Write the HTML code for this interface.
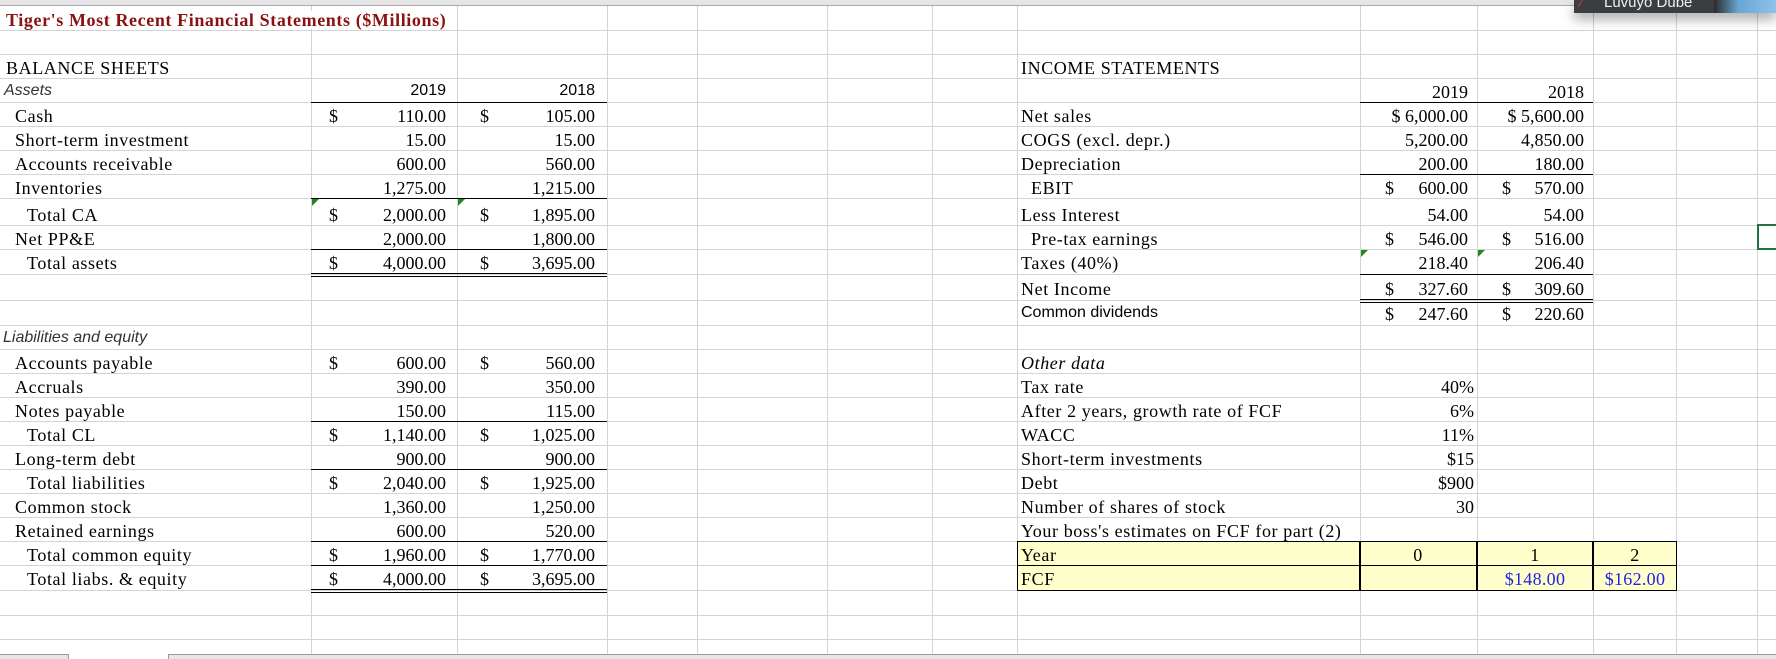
<!DOCTYPE html>
<html><head><meta charset="utf-8">
<style>
*{margin:0;padding:0;box-sizing:border-box}
body{width:1776px;height:659px;overflow:hidden;background:#fff;position:relative;font-family:"Liberation Serif",serif;font-size:18px;color:#000}
.h{position:absolute;left:0;width:1776px;height:1px;background:#d4d4d4}
.v{position:absolute;top:6px;height:648px;width:1px;background:#d4d4d4}
.t{position:absolute;white-space:nowrap;line-height:1}
.t:not(.r){letter-spacing:.6px}
.s{font-family:"Liberation Sans",sans-serif;font-size:16px}
.t.s{letter-spacing:0}
.r{text-align:right}
.bk{position:absolute;height:1px;background:#000}
.dbl{position:absolute;height:4px;border-top:1px solid #000;border-bottom:1px solid #000}
.tri{position:absolute;width:0;height:0;border-top:7px solid #1e8a1e;border-right:7px solid transparent}
</style></head><body>

<div style="position:absolute;left:0;top:0;width:1776px;height:6px;background:#e6e6e6;border-bottom:1px solid #ababab"></div>

<div class="h" style="top:30px"></div><div class="h" style="top:54px"></div><div class="h" style="top:78px"></div>
<div class="h" style="top:102px"></div><div class="h" style="top:126px"></div><div class="h" style="top:150px"></div>
<div class="h" style="top:174px"></div><div class="h" style="top:198px"></div><div class="h" style="top:225px"></div>
<div class="h" style="top:249px"></div><div class="h" style="top:274px"></div><div class="h" style="top:300px"></div>
<div class="h" style="top:325px"></div><div class="h" style="top:349px"></div><div class="h" style="top:373px"></div>
<div class="h" style="top:397px"></div><div class="h" style="top:421px"></div><div class="h" style="top:445px"></div>
<div class="h" style="top:469px"></div><div class="h" style="top:493px"></div><div class="h" style="top:517px"></div>
<div class="h" style="top:541px"></div><div class="h" style="top:565px"></div><div class="h" style="top:590px"></div>
<div class="h" style="top:615px"></div><div class="h" style="top:639px"></div>

<div class="v" style="left:311px"></div><div class="v" style="left:457px"></div><div class="v" style="left:607px"></div>
<div class="v" style="left:697px"></div><div class="v" style="left:827px"></div><div class="v" style="left:932px"></div>
<div class="v" style="left:1017px"></div><div class="v" style="left:1360px"></div><div class="v" style="left:1477px"></div>
<div class="v" style="left:1593px"></div><div class="v" style="left:1676px"></div><div class="v" style="left:1757px"></div>

<div class="t" style="left:6px;top:11px;font-weight:bold;color:#8b1010;font-size:18px;background:#fff;padding-right:4px">Tiger's Most Recent Financial Statements ($Millions)</div>

<div class="t" style="left:6px;top:59px">BALANCE SHEETS</div>
<div class="t s" style="left:4px;top:83px;font-style:italic;color:#333">Assets</div>
<div class="t" style="left:15px;top:107px">Cash</div>
<div class="t" style="left:15px;top:131px">Short-term investment</div>
<div class="t" style="left:15px;top:155px">Accounts receivable</div>
<div class="t" style="left:15px;top:179px">Inventories</div>
<div class="t" style="left:27px;top:206px">Total CA</div>
<div class="t" style="left:15px;top:230px">Net PP&amp;E</div>
<div class="t" style="left:27px;top:254px">Total assets</div>

<div class="t s" style="left:3px;top:330px;font-style:italic;color:#333">Liabilities and equity</div>
<div class="t" style="left:15px;top:354px">Accounts payable</div>
<div class="t" style="left:15px;top:378px">Accruals</div>
<div class="t" style="left:15px;top:402px">Notes payable</div>
<div class="t" style="left:27px;top:426px">Total CL</div>
<div class="t" style="left:15px;top:450px">Long-term debt</div>
<div class="t" style="left:27px;top:474px">Total liabilities</div>
<div class="t" style="left:15px;top:498px">Common stock</div>
<div class="t" style="left:15px;top:522px">Retained earnings</div>
<div class="t" style="left:27px;top:546px">Total common equity</div>
<div class="t" style="left:27px;top:570px">Total liabs. &amp; equity</div>

<div class="t s r" style="right:1330px;top:83px">2019</div>
<div class="t s r" style="right:1181px;top:83px">2018</div>

<div class="t" style="left:329px;top:107px">$</div><div class="t r" style="right:1330px;top:107px">110.00</div>
<div class="t" style="left:480px;top:107px">$</div><div class="t r" style="right:1181px;top:107px">105.00</div>
<div class="t r" style="right:1330px;top:131px">15.00</div><div class="t r" style="right:1181px;top:131px">15.00</div>
<div class="t r" style="right:1330px;top:155px">600.00</div><div class="t r" style="right:1181px;top:155px">560.00</div>
<div class="t r" style="right:1330px;top:179px">1,275.00</div><div class="t r" style="right:1181px;top:179px">1,215.00</div>
<div class="t" style="left:329px;top:206px">$</div><div class="t r" style="right:1330px;top:206px">2,000.00</div>
<div class="t" style="left:480px;top:206px">$</div><div class="t r" style="right:1181px;top:206px">1,895.00</div>
<div class="t r" style="right:1330px;top:230px">2,000.00</div><div class="t r" style="right:1181px;top:230px">1,800.00</div>
<div class="t" style="left:329px;top:254px">$</div><div class="t r" style="right:1330px;top:254px">4,000.00</div>
<div class="t" style="left:480px;top:254px">$</div><div class="t r" style="right:1181px;top:254px">3,695.00</div>

<div class="t" style="left:329px;top:354px">$</div><div class="t r" style="right:1330px;top:354px">600.00</div>
<div class="t" style="left:480px;top:354px">$</div><div class="t r" style="right:1181px;top:354px">560.00</div>
<div class="t r" style="right:1330px;top:378px">390.00</div><div class="t r" style="right:1181px;top:378px">350.00</div>
<div class="t r" style="right:1330px;top:402px">150.00</div><div class="t r" style="right:1181px;top:402px">115.00</div>
<div class="t" style="left:329px;top:426px">$</div><div class="t r" style="right:1330px;top:426px">1,140.00</div>
<div class="t" style="left:480px;top:426px">$</div><div class="t r" style="right:1181px;top:426px">1,025.00</div>
<div class="t r" style="right:1330px;top:450px">900.00</div><div class="t r" style="right:1181px;top:450px">900.00</div>
<div class="t" style="left:329px;top:474px">$</div><div class="t r" style="right:1330px;top:474px">2,040.00</div>
<div class="t" style="left:480px;top:474px">$</div><div class="t r" style="right:1181px;top:474px">1,925.00</div>
<div class="t r" style="right:1330px;top:498px">1,360.00</div><div class="t r" style="right:1181px;top:498px">1,250.00</div>
<div class="t r" style="right:1330px;top:522px">600.00</div><div class="t r" style="right:1181px;top:522px">520.00</div>
<div class="t" style="left:329px;top:546px">$</div><div class="t r" style="right:1330px;top:546px">1,960.00</div>
<div class="t" style="left:480px;top:546px">$</div><div class="t r" style="right:1181px;top:546px">1,770.00</div>
<div class="t" style="left:329px;top:570px">$</div><div class="t r" style="right:1330px;top:570px">4,000.00</div>
<div class="t" style="left:480px;top:570px">$</div><div class="t r" style="right:1181px;top:570px">3,695.00</div>

<div class="bk" style="left:311px;width:296px;top:102px"></div>
<div class="bk" style="left:311px;width:296px;top:198px"></div>
<div class="bk" style="left:311px;width:296px;top:249px"></div>
<div class="dbl" style="left:311px;width:296px;top:273px"></div>
<div class="bk" style="left:311px;width:296px;top:421px"></div>
<div class="bk" style="left:311px;width:296px;top:469px"></div>
<div class="bk" style="left:311px;width:296px;top:541px"></div>
<div class="bk" style="left:311px;width:296px;top:565px"></div>
<div class="dbl" style="left:311px;width:296px;top:589px"></div>
<div class="tri" style="left:312px;top:199px"></div>
<div class="tri" style="left:458px;top:199px"></div>

<div class="t" style="left:1021px;top:59px">INCOME STATEMENTS</div>
<div class="t r" style="right:308px;top:83px">2019</div>
<div class="t r" style="right:192px;top:83px">2018</div>
<div class="t" style="left:1021px;top:107px">Net sales</div>
<div class="t" style="left:1021px;top:131px">COGS (excl. depr.)</div>
<div class="t" style="left:1021px;top:155px">Depreciation</div>
<div class="t" style="left:1031px;top:179px">EBIT</div>
<div class="t" style="left:1021px;top:206px">Less Interest</div>
<div class="t" style="left:1031px;top:230px">Pre-tax earnings</div>
<div class="t" style="left:1021px;top:254px">Taxes (40%)</div>
<div class="t" style="left:1021px;top:280px">Net Income</div>
<div class="t s" style="left:1021px;top:305px">Common dividends</div>

<div class="t r" style="right:308px;top:107px">$ 6,000.00</div><div class="t r" style="right:192px;top:107px">$ 5,600.00</div>
<div class="t r" style="right:308px;top:131px">5,200.00</div><div class="t r" style="right:192px;top:131px">4,850.00</div>
<div class="t r" style="right:308px;top:155px">200.00</div><div class="t r" style="right:192px;top:155px">180.00</div>
<div class="t" style="left:1385px;top:179px">$</div><div class="t r" style="right:308px;top:179px">600.00</div>
<div class="t" style="left:1502px;top:179px">$</div><div class="t r" style="right:192px;top:179px">570.00</div>
<div class="t r" style="right:308px;top:206px">54.00</div><div class="t r" style="right:192px;top:206px">54.00</div>
<div class="t" style="left:1385px;top:230px">$</div><div class="t r" style="right:308px;top:230px">546.00</div>
<div class="t" style="left:1502px;top:230px">$</div><div class="t r" style="right:192px;top:230px">516.00</div>
<div class="t r" style="right:308px;top:254px">218.40</div><div class="t r" style="right:192px;top:254px">206.40</div>
<div class="t" style="left:1385px;top:280px">$</div><div class="t r" style="right:308px;top:280px">327.60</div>
<div class="t" style="left:1502px;top:280px">$</div><div class="t r" style="right:192px;top:280px">309.60</div>
<div class="t" style="left:1385px;top:305px">$</div><div class="t r" style="right:308px;top:305px">247.60</div>
<div class="t" style="left:1502px;top:305px">$</div><div class="t r" style="right:192px;top:305px">220.60</div>

<div class="bk" style="left:1360px;width:233px;top:102px"></div>
<div class="bk" style="left:1360px;width:233px;top:174px"></div>
<div class="bk" style="left:1360px;width:233px;top:274px"></div>
<div class="dbl" style="left:1360px;width:233px;top:299px"></div>
<div class="tri" style="left:1361px;top:250px"></div>
<div class="tri" style="left:1478px;top:250px"></div>

<div class="t" style="left:1021px;top:354px;font-style:italic">Other data</div>
<div class="t" style="left:1021px;top:378px">Tax rate</div>
<div class="t" style="left:1021px;top:402px">After 2 years, growth rate of FCF</div>
<div class="t" style="left:1021px;top:426px">WACC</div>
<div class="t" style="left:1021px;top:450px">Short-term investments</div>
<div class="t" style="left:1021px;top:474px">Debt</div>
<div class="t" style="left:1021px;top:498px">Number of shares of stock</div>
<div class="t" style="left:1021px;top:522px">Your boss's estimates on FCF for part (2)</div>
<div class="t r" style="right:302px;top:378px">40%</div>
<div class="t r" style="right:302px;top:402px">6%</div>
<div class="t r" style="right:302px;top:426px">11%</div>
<div class="t r" style="right:302px;top:450px">$15</div>
<div class="t r" style="right:302px;top:474px">$900</div>
<div class="t r" style="right:302px;top:498px">30</div>

<div style="position:absolute;left:1017px;top:541px;width:660px;height:50px;background:#ffffcc;border:1.5px solid #000"></div>
<div class="bk" style="left:1017px;width:660px;top:565px"></div>
<div style="position:absolute;left:1359px;top:541px;width:1.5px;height:50px;background:#000"></div>
<div style="position:absolute;left:1476px;top:541px;width:1.5px;height:50px;background:#000"></div>
<div style="position:absolute;left:1592px;top:541px;width:1.5px;height:50px;background:#000"></div>
<div class="t" style="left:1021px;top:546px">Year</div>
<div class="t" style="left:1021px;top:570px">FCF</div>
<div class="t" style="left:1360px;width:116px;text-align:center;top:546px">0</div>
<div class="t" style="left:1477px;width:116px;text-align:center;top:546px">1</div>
<div class="t" style="left:1593px;width:84px;text-align:center;top:546px">2</div>
<div class="t" style="left:1477px;width:116px;text-align:center;top:570px;color:#2323e6;letter-spacing:.3px">$148.00</div>
<div class="t" style="left:1593px;width:84px;text-align:center;top:570px;color:#2323e6;letter-spacing:.3px">$162.00</div>

<div style="position:absolute;left:1757px;top:224px;width:22px;height:26px;border:2px solid #217346"></div>

<div style="position:absolute;left:0;top:654px;width:1776px;height:5px;background:#fff"></div>
<div style="position:absolute;left:0;top:654px;width:69px;height:5px;background:#e6e6e6;border-top:1px solid #999;border-right:1px solid #999"></div>
<div style="position:absolute;left:168px;top:654px;width:1608px;height:5px;background:#e6e6e6;border-top:1px solid #999;border-left:1px solid #999"></div>

<div style="position:absolute;left:1574px;top:0;width:202px;height:13px;background:#3a3e42;box-shadow:0 6px 12px rgba(0,0,0,0.35);overflow:hidden">
  <div style="position:absolute;left:140px;top:0;width:62px;height:13px;background:linear-gradient(90deg,#2b2b2b,#6aa7d6 40%,#8cc2ea)"></div>
  <div style="position:absolute;left:6px;top:-4px;color:#e34040;font-family:'Liberation Sans',sans-serif;font-size:12px">&#x2215;</div>
  <div style="position:absolute;left:30px;top:-6px;color:#f0f0f0;font-family:'Liberation Sans',sans-serif;font-size:15px;white-space:nowrap">Luvuyo Dube</div>
</div>
</body></html>
